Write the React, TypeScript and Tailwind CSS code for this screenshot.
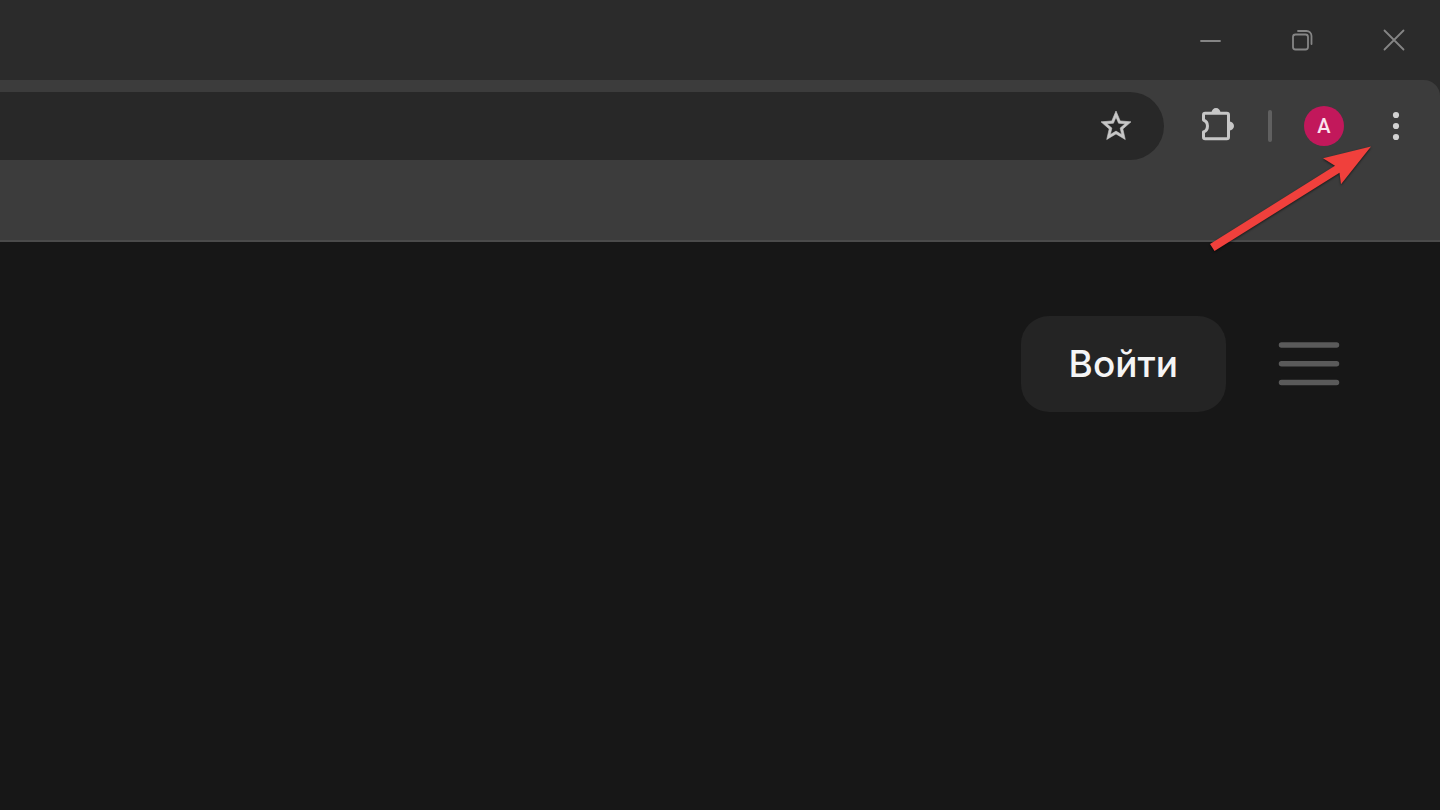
import type { ReactNode } from "react";

const windowButtons = [
  {
    id: 1,
    name: "Свернуть",
    icon: <path d="M3 13h19" />,
  },
  {
    id: 2,
    name: "Восстановить",
    icon: (
      <>
        <rect x="3" y="6.5" width="15" height="15" rx="2.5" />
        <path d="M8 3h8.500a5 5 0 0 1 5 5V16" />
      </>
    ),
  },
  {
    id: 3,
    name: "Закрыть",
    icon: <path d="M2.500 2.500l19 19M21.500 2.500l-19 19" />,
  },
];

function IconButton({
  label,
  className = "",
  children,
}: {
  label: string;
  className?: string;
  children: ReactNode;
}) {
  return (
    <button
      type="button"
      aria-label={label}
      className={`flex shrink-0 items-center justify-center ${className}`}
    >
      {children}
    </button>
  );
}

function TitleBar() {
  return (
    <div className="flex h-20 justify-end">
      {windowButtons.map((item) => (
        <IconButton key={item.id} label={item.name} className="w-[92px]">
          <svg
            width="24"
            height="24"
            viewBox="0 0 24 24"
            fill="none"
            stroke="#858585"
            strokeWidth="1.8"
            strokeLinecap="round"
          >
            {item.icon}
          </svg>
        </IconButton>
      ))}
    </div>
  );
}

function Toolbar() {
  return (
    <div className="relative rounded-tr-2xl border-b-2 border-[#4b4b4b] bg-[#3c3c3c] pt-3 pb-20">
      <div className="flex items-center pr-5">
        {/* Address */}
        <div className="flex h-[68px] flex-1 items-center rounded-r-full bg-[#282828] pr-6">
          <input
            type="text"
            aria-label="Адресная строка"
            className="h-full min-w-0 flex-1 bg-transparent px-6 text-2xl text-gray-200 outline-none"
          />
          <IconButton label="Добавить в закладки" className="size-12">
            <svg
              width="36"
              height="36"
              viewBox="0 0 24 24"
              fill="#c7c7c7"
              stroke="#c7c7c7"
              strokeWidth="0.4"
            >
              <path d="M22 9.24l-7.19-.62L12 2 9.19 8.63 2 9.24l5.46 4.73L5.82 21 12 17.27 18.18 21l-1.63-7.03L22 9.24zM12 15.4l-3.76 2.27 1-4.28-3.32-2.88 4.38-.38L12 6.1l1.71 4.04 4.38.38-3.32 2.88 1 4.28L12 15.4z" />
            </svg>
          </IconButton>
        </div>

        <IconButton label="Расширения" className="ml-[34px] size-10">
          <svg width="40" height="40" viewBox="0 0 40 40" fill="none">
            <path
              d="M5.500 14V9q0-1.700 1.700-1.700h21.600q1.700 0 1.700 1.700v22q0 1.700-1.700 1.700H7.200q-1.700 0-1.700-1.700v-5C10.800 24 10.800 16 5.500 14Z"
              stroke="#c7c7c7"
              strokeWidth="3"
              strokeLinejoin="round"
            />
            <path d="M13.500 7a4.500 5 0 0 1 9 0ZM31 15.500a5 4.500 0 0 1 0 9Z" fill="#c7c7c7" />
          </svg>
        </IconButton>

        <div className="ml-[30px] h-8 w-1 rounded-full bg-[#606060]" />

        <button
          type="button"
          className="ml-8 size-10 rounded-full bg-[#c2185b] font-[Roboto,sans-serif] text-xl font-medium text-[#fbe3ee]"
        >
          A
        </button>

        <IconButton label="Меню браузера" className="ml-7 size-12">
          <svg width="8" height="32" viewBox="0 0 8 32" fill="#d2d2d2">
            <circle cx="4" cy="5" r="3.1" />
            <circle cx="4" cy="16" r="3.1" />
            <circle cx="4" cy="27" r="3.1" />
          </svg>
        </IconButton>
      </div>

      {/* Arrow pointing at the browser menu */}
      <svg
        width="172"
        height="116"
        viewBox="0 0 172 116"
        className="pointer-events-none absolute top-[60px] right-[63px] drop-shadow-[0_1px_1px_#00000099]"
      >
        <path
          d="M166 6.500L118 18.300L130 25.700L5 104L9.500 111L134.500 32.700L136 44.300Z"
          fill="#f0403c"
        />
      </svg>
    </div>
  );
}

export default function App() {
  return (
    <div className="flex min-h-screen flex-col bg-[#2b2b2b] font-[Inter,sans-serif]">
      <TitleBar />
      <Toolbar />

      {/* Page */}
      <main className="flex-1 bg-[#171717]">
        <header className="flex items-center justify-end pt-[74px] pr-[100px]">
          <button
            type="button"
            className="h-24 rounded-[28px] bg-[#242424] px-12 text-[37px] font-medium text-[#f5f5f5]"
          >
            Войти
          </button>
          <IconButton label="Меню" className="ml-[52px] h-16">
            <svg
              width="62"
              height="46"
              viewBox="0 0 62 46"
              stroke="#5a5a5a"
              strokeWidth="5.5"
              strokeLinecap="round"
            >
              <path d="M3.500 4h55M3.500 22.700h55M3.500 41.400h55" />
            </svg>
          </IconButton>
        </header>
      </main>
    </div>
  );
}
